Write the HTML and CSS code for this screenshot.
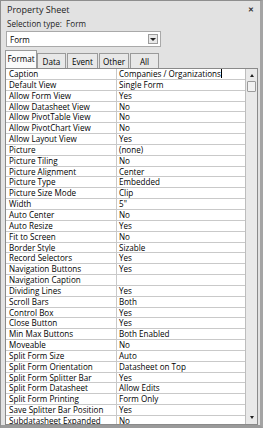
FILE: index.html
```html
<!DOCTYPE html>
<html>
<head>
    <title>Property Sheet</title>
    <link rel="stylesheet" href="styles.css">
</head>
<body>
    <div class="sheet">
        <div class="titlebar">
            <span class="title">Property Sheet</span>
            <span class="close">&#x2715;</span>
        </div>
        <div class="seltype">Selection type:&nbsp; Form</div>

        <div class="combo">
            <span class="combo-text">Form</span>
            <span class="combo-btn"><span class="arrow-down"></span></span>
        </div>

        <div class="tabs">
            <div class="tab active">Format</div>
            <div class="tab">Data</div>
            <div class="tab">Event</div>
            <div class="tab">Other</div>
            <div class="tab">All</div>
        </div>

        <div class="grid">
            <div class="rows">
                <div class="row"><div class="name">Caption</div><div class="value editing">Companies / Organizations<span class="caret"></span></div></div>
                <div class="row"><div class="name">Default View</div><div class="value">Single Form</div></div>
                <div class="row"><div class="name">Allow Form View</div><div class="value">Yes</div></div>
                <div class="row"><div class="name">Allow Datasheet View</div><div class="value">No</div></div>
                <div class="row"><div class="name">Allow PivotTable View</div><div class="value">No</div></div>
                <div class="row"><div class="name">Allow PivotChart View</div><div class="value">No</div></div>
                <div class="row"><div class="name">Allow Layout View</div><div class="value">Yes</div></div>
                <div class="row"><div class="name">Picture</div><div class="value">(none)</div></div>
                <div class="row"><div class="name">Picture Tiling</div><div class="value">No</div></div>
                <div class="row"><div class="name">Picture Alignment</div><div class="value">Center</div></div>
                <div class="row"><div class="name">Picture Type</div><div class="value">Embedded</div></div>
                <div class="row"><div class="name">Picture Size Mode</div><div class="value">Clip</div></div>
                <div class="row"><div class="name">Width</div><div class="value">5"</div></div>
                <div class="row"><div class="name">Auto Center</div><div class="value">No</div></div>
                <div class="row"><div class="name">Auto Resize</div><div class="value">Yes</div></div>
                <div class="row"><div class="name">Fit to Screen</div><div class="value">No</div></div>
                <div class="row"><div class="name">Border Style</div><div class="value">Sizable</div></div>
                <div class="row"><div class="name">Record Selectors</div><div class="value">Yes</div></div>
                <div class="row"><div class="name">Navigation Buttons</div><div class="value">Yes</div></div>
                <div class="row"><div class="name">Navigation Caption</div><div class="value"></div></div>
                <div class="row"><div class="name">Dividing Lines</div><div class="value">Yes</div></div>
                <div class="row"><div class="name">Scroll Bars</div><div class="value">Both</div></div>
                <div class="row"><div class="name">Control Box</div><div class="value">Yes</div></div>
                <div class="row"><div class="name">Close Button</div><div class="value">Yes</div></div>
                <div class="row"><div class="name">Min Max Buttons</div><div class="value">Both Enabled</div></div>
                <div class="row"><div class="name">Moveable</div><div class="value">No</div></div>
                <div class="row"><div class="name">Split Form Size</div><div class="value">Auto</div></div>
                <div class="row"><div class="name">Split Form Orientation</div><div class="value">Datasheet on Top</div></div>
                <div class="row"><div class="name">Split Form Splitter Bar</div><div class="value">Yes</div></div>
                <div class="row"><div class="name">Split Form Datasheet</div><div class="value">Allow Edits</div></div>
                <div class="row"><div class="name">Split Form Printing</div><div class="value">Form Only</div></div>
                <div class="row"><div class="name">Save Splitter Bar Position</div><div class="value">Yes</div></div>
                <div class="row"><div class="name">Subdatasheet Expanded</div><div class="value">No</div></div>
            </div>
            <div class="scrollbar">
                <span class="sb-arrow up"></span>
                <span class="thumb"></span>
                <span class="sb-arrow down"></span>
            </div>
        </div>
    </div>
</body>
</html>
```

FILE: styles.css
```css
/* property sheet panel */
body {
    margin: 0;
    font-family: "Open Sans", "Noto Sans", Arial, sans-serif;
    font-size: 8.1px;
    color: #000;
    background-color: #ffffff;
}
.sheet {
    width: 263px;
    height: 428px;
    box-sizing: border-box;
    border: 1px solid #8e8e8e;
    border-right: 3px solid #a4a4a4;
    border-bottom: 3px solid #9a9a9a;
    background-color: #e2e2e2;
    padding: 0 2px 0 4px;
    display: flex;
    flex-direction: column;
    overflow: hidden;
}
.titlebar {
    height: 17px;
    flex-shrink: 0;
    display: flex;
    align-items: center;
    justify-content: space-between;
    padding: 0 4px 0 2px;
}
.title {
    font-size: 9px;
    color: #222;
}
.close {
    font-size: 7px;
    font-weight: bold;
    color: #333;
}
.seltype {
    height: 13px;
    flex-shrink: 0;
    line-height: 12px;
    padding-left: 2px;
    color: #222;
}
.combo {
    width: 155px;
    height: 16px;
    flex-shrink: 0;
    margin-left: 1px;
    box-sizing: border-box;
    border: 1px solid #a9a9a9;
    background-color: #fff;
    display: flex;
    align-items: center;
    justify-content: space-between;
    padding: 0 2px 0 3px;
}
.combo-btn {
    width: 10px;
    height: 10px;
    box-sizing: border-box;
    border: 1px solid #9c9c9c;
    background-color: #e9e9e9;
    display: flex;
    align-items: center;
    justify-content: center;
}
.arrow-down {
    width: 0;
    height: 0;
    border-left: 3px solid transparent;
    border-right: 3px solid transparent;
    border-top: 3px solid #222;
}
.tabs {
    display: flex;
    flex-shrink: 0;
    align-items: flex-end;
    margin-top: 3px;
    height: 18px;
}
.tab {
    height: 15px;
    line-height: 15px;
    box-sizing: border-box;
    border: 1px solid #9a9a9a;
    border-bottom: none;
    margin-right: 1px;
    background-color: #e8e8e8;
    text-align: center;
}
.tab:nth-child(1) { width: 32px; }
.tab:nth-child(2) { width: 29px; }
.tab:nth-child(3) { width: 31px; }
.tab:nth-child(4) { width: 30px; }
.tab:nth-child(5) { width: 29px; }
.tab.active {
    height: 18px;
    line-height: 16px;
    background-color: #fafafa;
    margin-right: 0;
}
.grid {
    flex: 1;
    display: flex;
    border: 1px solid #8a8a8a;
    background-color: #fff;
    overflow: hidden;
}
.rows {
    width: 239px;
    border-right: 1px solid #bdbdbd;
}
.row {
    display: flex;
    height: 10.85px;
    box-sizing: border-box;
    border-bottom: 1px solid #c9c9c9;
}
.name {
    width: 111px;
    box-sizing: border-box;
    border-right: 1px solid #c9c9c9;
    padding-left: 3px;
    line-height: 10px;
    white-space: nowrap;
    overflow: hidden;
}
.value {
    flex: 1;
    padding-left: 2px;
    line-height: 10px;
    white-space: nowrap;
    overflow: hidden;
}
.value.editing {
    display: flex;
    align-items: center;
}
.caret {
    width: 1px;
    height: 9px;
    background-color: #000;
}
.scrollbar {
    flex: 1;
    background-color: #e9e9e9;
    display: flex;
    flex-direction: column;
    align-items: center;
    padding-top: 5px;
}
.sb-arrow {
    width: 0;
    height: 0;
    border-left: 2.5px solid transparent;
    border-right: 2.5px solid transparent;
}
.sb-arrow.up {
    border-bottom: 3px solid #222;
}
.sb-arrow.down {
    border-top: 3px solid #222;
    margin-top: auto;
    margin-bottom: 5px;
}
.thumb {
    width: 9px;
    height: 11px;
    margin-top: 4px;
    box-sizing: border-box;
    border: 1px solid #9c9c9c;
    border-radius: 1px;
    background-color: #f2f2f2;
}
```
